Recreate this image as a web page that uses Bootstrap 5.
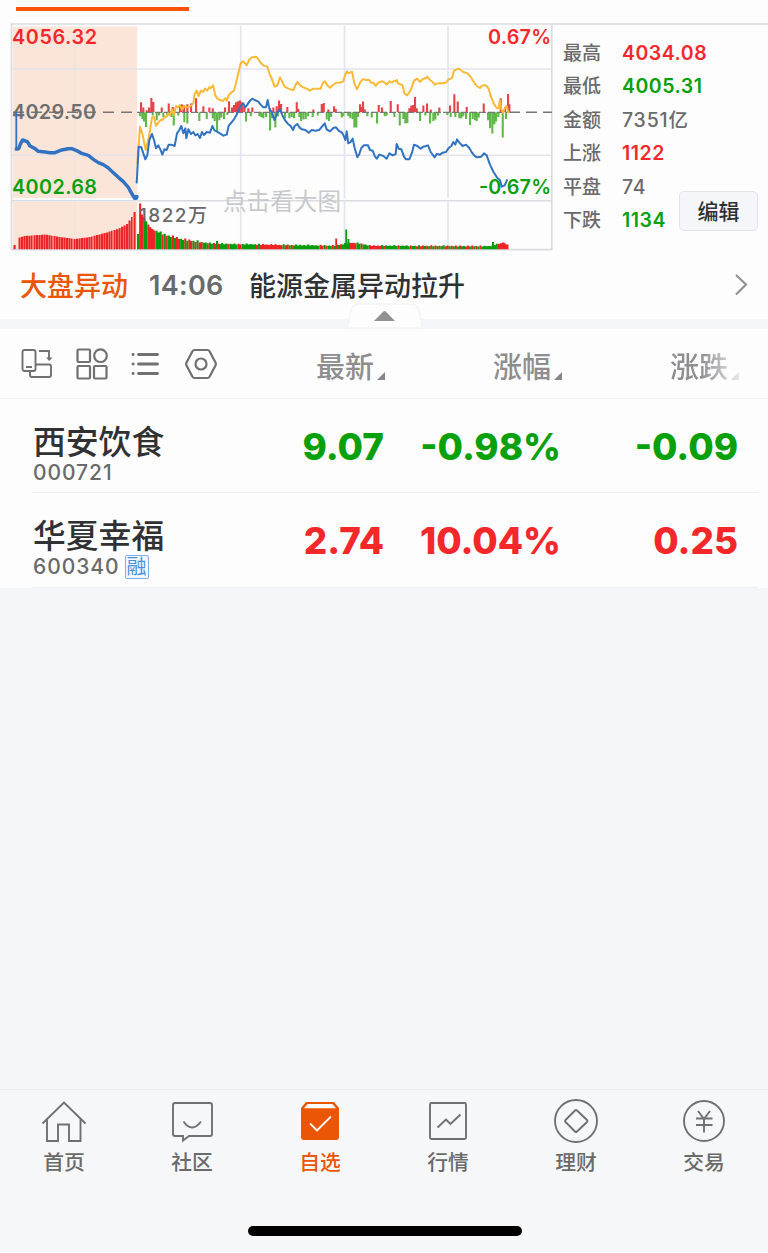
<!DOCTYPE html>
<html lang="zh-CN">
<head>
<meta charset="utf-8">
<meta name="viewport" content="width=device-width, initial-scale=1">
<title>自选</title>
<link href="https://cdn.jsdelivr.net/npm/bootstrap@5.3.0/dist/css/bootstrap.min.css" rel="stylesheet">
<style>
:root{--up:#f4282b;--down:#08a00b;--accent:#eb5506;--ink:#303133;--mute:#6a6a6a;--soft:#f4f6f9}
body{font-family:Inter,"Noto Sans CJK SC",sans-serif;background:#fdfdfe;color:var(--ink);line-height:1;height:1253px;overflow:hidden}
svg{display:block;flex:none}
.up{color:var(--up)}.down{color:var(--down)}.accent{color:var(--accent)}.mute{color:var(--mute)}
.tabline{height:23px;padding:7px 0 0 16px}
.tabline span{display:block;width:173px;height:4px;background:#fa5305}
.market{height:228px}
.market-side{border-top:2px solid #e1e3e9;padding:11.5px 0 0 9px}
.stat{height:33.5px;font-size:19px;font-weight:500}
.stat dt{width:59px;font-weight:500}
.stat dd{font-size:19.5px;letter-spacing:.8px}
.stat dd.up,.stat dd.down{font-weight:600;letter-spacing:.5px}
.btn-edit{right:10px;bottom:20px;width:79px;height:40px;font-size:21px;font-weight:500;background:#f5f6f9;border:1.5px solid #e2e4e9;border-radius:5px;padding:2px 0 0;line-height:36px;color:#303133}
.newsline{height:68px;padding:3px 20px 0;font-size:27px;font-weight:500}
.news-time{margin-left:21px;letter-spacing:.3px;font-weight:600;width:79px;margin-top:-3px}
.news-title{margin-left:21px}
.divider{height:10px;background:var(--soft)}
.grip{left:347px;top:-16px}
.cols{height:69.5px;border-bottom:1.5px solid #eff0f2;padding-left:21px;font-size:29px;font-weight:500;color:#8e8e90}
.colname{display:flex;align-items:flex-end;justify-content:flex-end;gap:3px;padding-top:4px}
.colname span.lbl{position:relative;top:2px}
.fade-end{-webkit-mask-image:linear-gradient(90deg,#000 45%,transparent 112%);mask-image:linear-gradient(90deg,#000 45%,transparent 112%);padding-bottom:4px;margin-bottom:-4px}
.stock{height:94.5px;margin:0 10px 0 32px;border-bottom:1.5px solid #eff0f2}
.stock-name{font-size:32.8px;font-weight:500;line-height:36px;padding-top:25px}
.stock-code{font-size:21px;letter-spacing:.95px;line-height:24px;font-weight:500;color:var(--mute);gap:5px;padding-top:1px}
.tagbox{width:24px;height:24px;border:1.5px solid #7db0e6;border-radius:2px;color:#4d8fd9;font-size:20px;line-height:22px;letter-spacing:0;font-weight:400;background:#f2f8ff;display:flex;justify-content:center}
.quote{font-size:36.8px;font-weight:800;line-height:95px;text-align:right}
.blank{height:501.5px;background:var(--soft)}
.tabbar{height:163px;background:#f6f7f9;border-top:1.5px solid #e9edef}
.tabitem{padding-top:8.5px;font-size:20.8px;font-weight:500;color:var(--mute);text-align:center}
.tabitem svg{margin:0 auto 8px}
.tabitem.sel{color:var(--accent)}
.homebar{width:274px;height:10px;border-radius:5px;background:#000;left:247.5px;bottom:16px}
.ln{fill:none;stroke:#707070;stroke-width:1.9}
</style>
</head>
<body>
<div class="tabline"><span></span></div>

<section class="market d-flex position-relative">
  <svg width="554" height="228" viewBox="0 23 554 228" font-size="19.8" font-weight="600">
    <path fill="#fbe5d9" d="M13 26.5h124V198H13zM13 202h124v47H13z"/>
    <g stroke="#e3e4ec" stroke-width="1.6" fill="none">
      <path d="M74.7 26v172M74.7 202v47" opacity=".5"/>
      <path d="M240.7 26v172M240.7 202v47M344.5 26v172M344.5 202v47M448 26v172M448 202v47M12 69H551M12 155.3H551"/>
      <path stroke="#d9dbe0" d="M10.5 24H554M11.5 24v226M551.8 24v226M11 200.7H552M11 249.6H552"/>
    </g>
    <g id="volume"></g>
    <g id="breadth"></g>
    <text x="223" y="210" font-size="23.6" font-weight="400" fill="#c8c9cc" textLength="118">点击看大图</text>
    <path d="M12 112.3h124" stroke="#777" stroke-width="1.5" stroke-dasharray="11 7" stroke-dashoffset="-1"/>
    <path d="M137 112.3h370" stroke="#777" stroke-width="1.2" stroke-dasharray="7 2"/>
    <path d="M509 112.3h43" stroke="#777" stroke-width="1.5" stroke-dasharray="11 6"/>
    <text x="139" y="222" font-size="19" font-weight="500" fill="#686868" textLength="68">1822万</text>
    <text x="12" y="44" fill="#f4282b" textLength="85">4056.32</text>
    <text x="12" y="119" fill="#6e6e6e" textLength="84">4029.50</text>
    <text x="12" y="193.500" fill="#08a00b" textLength="85">4002.68</text>
    <text x="488" y="44" fill="#f4282b" textLength="63">0.67%</text>
    <g fill="none" stroke-linejoin="round">
      <path stroke="#3173c2" stroke-width="10.5" stroke-linecap="round" transform="scale(.33333)" d="M49 447l7-1 6-16 6-10 14 5 8 13 15 8 10 8 20 2 15 2 15 0 20-8 20-4 10 0 15 6 15 8 20 6 15 12 15 10 15 6 15 10 15 14 15 14 15 13 15 17 10 18 8 14 8-4"/>
      <circle cx="135.500" cy="197.500" r="2.600" fill="#3173c2"/>
      <path stroke="#3173c2" stroke-width="1.8" d="M16.3 112v37"/>
      <g transform="translate(130 20) scale(.33333)" stroke-width="6">
        <polyline stroke="#fbb935" points="22,430 30,320 38,345 47,390 57,350 66,292 72,290 78,318 85,308 92,300 98,300 104,290 110,290 115,280 120,285 126,268 132,285 138,258 144,262 150,255 156,270 162,258 168,262 175,262 182,258 190,250 193,225 200,212 206,228 213,212 219,216 225,206 231,212 238,202 243,204 249,196 256,226 262,236 270,240 280,243 286,234 290,242 297,224 306,216 312,212 318,190 325,160 332,130 340,124 350,136 357,120 365,112 372,112 378,110 384,116 390,126 400,136 412,140 418,160 426,178 434,200 442,196 450,172 457,186 464,200 475,206 490,211 497,194 502,186 510,196 520,202 530,206 540,212 550,206 560,206 572,206 578,190 585,184 592,196 600,203 608,196 618,188 630,188 640,184 645,165 651,154 656,160 666,155 673,190 681,208 690,188 698,178 710,180 718,180 723,188 730,188 737,198 745,188 754,184 762,186 770,194 778,184 786,188 792,182 798,184 800,180 804,190 818,196 823,220 831,226 840,214 846,200 852,182 862,176 870,186 880,176 888,174 892,170 900,180 908,186 914,194 924,190 935,190 948,188 956,178 966,174 972,152 980,148 986,146 992,150 1000,156 1006,158 1012,160 1022,170 1030,184 1040,198 1050,204 1058,196 1068,196 1076,206 1083,230 1092,252 1100,264 1106,264 1110,240 1114,268 1119,278 1124,265 1130,258 1136,280"/>
        <polyline stroke="#3173c2" points="20,490 26,380 34,382 40,400 46,418 52,405 58,360 66,342 72,360 78,385 85,376 91,388 97,404 103,388 110,390 116,374 124,374 134,378 141,340 148,330 154,318 160,340 166,325 169,355 175,328 183,342 190,336 196,346 203,342 210,354 216,336 222,345 230,336 240,338 247,318 254,332 260,334 270,340 280,347 290,344 296,318 304,308 312,298 320,284 326,270 332,258 340,250 346,262 352,254 360,242 367,236 374,240 384,244 392,254 400,262 408,262 413,240 418,266 426,278 433,300 438,290 444,274 450,268 458,288 466,302 474,312 482,318 489,330 494,318 502,312 508,322 516,328 526,330 536,338 545,330 556,332 568,330 576,320 584,310 590,328 600,334 610,324 618,322 626,332 636,338 640,345 646,360 650,334 655,370 662,366 668,356 674,384 682,412 688,402 694,384 702,376 714,376 720,390 728,392 734,408 740,416 748,404 760,408 770,416 778,400 788,406 797,402 800,372 806,386 814,388 822,410 828,418 838,418 846,398 852,374 862,378 872,386 880,380 888,378 894,376 902,396 914,412 920,402 930,404 938,398 948,396 956,384 964,378 970,366 976,374 981,358 988,368 998,378 1008,374 1018,384 1026,398 1034,408 1042,412 1054,410 1062,400 1070,406 1080,434 1090,455 1102,474 1110,480 1115,500 1124,496 1132,478"/>
      </g>
    </g>
    <text x="479" y="193.500" fill="#08a00b" textLength="72">-0.67%</text>
  </svg>
  <div class="market-side flex-grow-1">
    <dl class="m-0">
      <div class="stat d-flex align-items-center"><dt class="mute">最高</dt><dd class="m-0 up">4034.08</dd></div>
      <div class="stat d-flex align-items-center"><dt class="mute">最低</dt><dd class="m-0 down">4005.31</dd></div>
      <div class="stat d-flex align-items-center"><dt class="mute">金额</dt><dd class="m-0 mute">7351亿</dd></div>
      <div class="stat d-flex align-items-center"><dt class="mute">上涨</dt><dd class="m-0 up">1122</dd></div>
      <div class="stat d-flex align-items-center"><dt class="mute">平盘</dt><dd class="m-0 mute">74</dd></div>
      <div class="stat d-flex align-items-center"><dt class="mute">下跌</dt><dd class="m-0 down">1134</dd></div>
    </dl>
  </div>
  <button class="btn btn-edit position-absolute">编辑</button>
</section>

<section class="newsline d-flex align-items-center">
  <span class="accent">大盘异动</span>
  <span class="mute news-time">14:06</span>
  <span class="news-title">能源金属异动拉升</span>
  <svg class="ms-auto" width="14" height="24" viewBox="0 0 14 24" style="margin-top:-3px"><path d="M2 2l10 9.500L2 21.500" fill="none" stroke="#929294" stroke-width="2.200"/></svg>
</section>
<div class="divider position-relative">
  <svg class="grip position-absolute" width="76" height="26" viewBox="0 0 76 26"><path d="M.7 25L3.500 9Q5 1 13 1H63Q71 1 72.500 9L75.300 25z" fill="#fdfdfe" stroke="#f3f4f6" stroke-width="1.500"/><path d="M27 18L36.300 8.500q1.200-1 2.400 0L48 18z" fill="#919191"/></svg>
</div>

<section class="cols d-flex align-items-center">
  <div class="d-flex align-items-center" style="gap:22.5px;width:205px;padding-top:1px">
    <svg width="32" height="32" viewBox="0 0 32 32" class="ln"><rect x="1.500" y="2" width="13" height="21" rx="2"/><path d="M5 19h6M15 16.500h13a2 2 0 0 1 2 2V27a2 2 0 0 1-2 2H11a2 2 0 0 1-2-2v-4M18 3h10v9"/><path d="M25 9.500h6.500l-3.300 3.500z" fill="#707070" stroke="none"/></svg>
    <svg width="32" height="32" viewBox="0 0 32 32" class="ln" style="stroke-width:2.200"><rect x="1.500" y="1.500" width="12.500" height="12.500" rx="1"/><circle cx="24.500" cy="7.700" r="6.300"/><rect x="1.500" y="18" width="12.500" height="12.500" rx="1"/><rect x="18" y="18" width="12.500" height="12.500" rx="1"/></svg>
    <svg width="32" height="32" viewBox="0 0 32 32" class="ln" style="stroke-width:2.800;stroke-linecap:round"><path d="M8.500 6.500h19M8.500 16h19M8.500 25.500h19M3 6.500h.2M3 16h.2M3 25.500h.2"/></svg>
    <svg width="32" height="32" viewBox="0 0 32 32" class="ln" style="stroke-linejoin:round;stroke-width:2.200"><path d="M9.500 2h13q1.300 0 2 1.200l6 11.300q.7 1.500 0 3l-6 11.300q-.7 1.200-2 1.200h-13q-1.300 0-2-1.200l-6-11.300q-.7-1.500 0-3l6-11.300q.7-1.200 2-1.200z"/><circle cx="16" cy="16" r="5.500"/></svg>
  </div>
  <div class="colname" style="width:159px"><span class="lbl">最新</span><svg width="8" height="8" viewBox="0 0 8 8"><path d="M8 0v8H0z" fill="#86868a"/></svg></div>
  <div class="colname" style="width:177px"><span class="lbl">涨幅</span><svg width="8" height="8" viewBox="0 0 8 8"><path d="M8 0v8H0z" fill="#86868a"/></svg></div>
  <div class="colname" style="width:177px"><span class="d-flex align-items-end fade-end" style="gap:3px"><span class="lbl">涨跌</span><svg width="8" height="8" viewBox="0 0 8 8"><path d="M8 0v8H0z" fill="#86868a"/></svg></span></div>
</section>

<section>
  <div class="stock d-flex">
    <div style="width:192px;padding-left:1px"><div class="stock-name">西安饮食</div><div class="stock-code d-flex align-items-center">000721</div></div>
    <div class="quote down" style="width:160px">9.07</div><div class="quote down" style="width:177px">-0.98%</div><div class="quote down" style="width:177px">-0.09</div>
  </div>
  <div class="stock d-flex">
    <div style="width:192px;padding-left:1px"><div class="stock-name">华夏幸福</div><div class="stock-code d-flex align-items-center">600340<span class="tagbox">融</span></div></div>
    <div class="quote up" style="width:160px">2.74</div><div class="quote up" style="width:177px">10.04%</div><div class="quote up" style="width:177px">0.25</div>
  </div>
</section>
<div class="blank"></div>

<nav class="tabbar position-relative">
  <div class="row g-0">
    <div class="col tabitem"><svg width="46" height="46" viewBox="0 0 46 46" class="ln"><path d="M1.500 24.500L23 3.500l21.500 21M6 20.500v21.500h11V25.500h11V42h11.500V20.500"/></svg>首页</div>
    <div class="col tabitem"><svg width="46" height="46" viewBox="0 0 46 46" class="ln"><path d="M6 4h35a2 2 0 0 1 2 2v29a2 2 0 0 1-2 2H20l-6 4.500V37H6a2 2 0 0 1-2-2V6a2 2 0 0 1 2-2zM14.500 22.500q8.500 12 17.500 0"/></svg>社区</div>
    <div class="col tabitem sel"><svg width="46" height="46" viewBox="0 0 46 46"><path d="M9 3h28l5 6v29q0 3-3 3H7q-3 0-3-3V9z" fill="#eb5506"/><path d="M10.500 5h25l3.500 4.300h-32z" fill="#fff"/><path d="M13 24.500l7 7L34 17.500" fill="none" stroke="#fff" stroke-width="1.800"/></svg>自选</div>
    <div class="col tabitem"><svg width="46" height="46" viewBox="0 0 46 46" class="ln"><rect x="5" y="4" width="36" height="36" rx="1.500"/><path d="M12.500 28.500l8.500-8 4.500 4.500L35.500 15.500"/></svg>行情</div>
    <div class="col tabitem"><svg width="46" height="46" viewBox="0 0 46 46" class="ln"><circle cx="23" cy="22" r="21"/><path d="M22 11.500q1-1 2 0L34 21q1 1 0 2L24 32.500q-1 1-2 0L12.500 23q-1-1 0-2z"/></svg>理财</div>
    <div class="col tabitem"><svg width="46" height="46" viewBox="0 0 46 46" class="ln"><circle cx="23" cy="22" r="20"/><path d="M17 12l6 8 6-8M23 20v13.500M15 19.500h16.500M15 26h16.500"/></svg>交易</div>
  </div>
  <div class="homebar position-absolute"></div>
</nav>

<script src="https://cdn.jsdelivr.net/npm/bootstrap@5.3.0/dist/js/bootstrap.bundle.min.js"></script>
<script>
const RED = '#ee2327', GREEN = '#079c0b';
const path = (id, d, fill, extra = '') =>
  document.getElementById(id).insertAdjacentHTML('beforeend', `<path d="${d}" fill="${fill}" ${extra}/>`);

// Trading volume: interpolated envelope, one bar per minute group
const env = [[13,245],[16,245],[17,238],[25,236],[45,234.5],[60,237],[75,239],[90,237],[105,233],[118,229],[127,224],[132,217],[135,211],[137,211],
  [137.1,234],[138.5,234],[138.6,203],[140,203],[141,213],[144,217],[146,221],[150,227],[155,231],[165,235.5],[180,239.5],[195,242],[215,244],[240,244.5],[300,245.5],[335,246],[350,243],[358,243.5],[370,246],[490,246.5],[500,243.5],[508,245]];
const topAt = x => { for (let i = 1; i < env.length; i++) if (x <= env[i][0]) {
  const [a, b] = env[i - 1], [c, d] = env[i]; return b + (d - b) * (x - a) / (c - a); } return 247; };
let red = '', green = '';
const bar = (x, w, y) => `M${x.toFixed(1)} ${y.toFixed(1)}h${w}V249.300h-${w}z`;
for (let x = 13.5, n = 0; x < 136; x += 2.5, n++) if (n !== 1) red += bar(x, n % 8 === 7 ? 1.6 : 2.15, topAt(x + 1));
const tone = 'grrggrrrrgggrgrggrgrrggrgrrgrgrrggrggrgrggggrggggrrgggggggrgrrrrrrrrrrrgrrgrgggggggggggggrrgrggrgrgrgggrrrrggrgggrrrrrrgrggggggrgggggrggrgrrgrgrgrgrggrrgrgrgrggrrgrgrgrggggggggrrrrr';
for (let x = 137, n = 0; x < 508; x += 2.05, n++) {
  const y = topAt(x + 1) - (n > 8 ? [0, 1.6, .3, 1, 0, 2][(n * 7) % 6] * (x < 200 ? 1 : .5) : 0);
  if (tone[n % tone.length] === 'r') red += bar(x, 2.1, y); else green += bar(x, 2.1, y);
}
green += bar(345.3, 1.8, 229.500) + bar(347.500, 1.8, 239) + bar(492, 2, 242) + bar(216, 2, 241);
red += bar(335.300, 1.8, 238.500) + bar(502, 2.5, 242.500) + bar(505, 3.500, 244.500);
path('volume', red, RED);
path('volume', green, GREEN);

// Advance / decline bars either side of the previous close
const adv = [33,30,40,14,50,6,57,14,64,43,70,31,95,14,116,26,128,16,150,22,155,24,162,22,172,24,183,26,198,42,220,18,238,14,248,12,285,14,297,33,306,14,312,22,318,30,324,33,330,35,336,30,343,20,355,12,367,14,420,12,430,14,440,18,447,35,453,25,472,16,500,30,505,10,550,8,575,25,581,28,595,8,612,18,617,10,
  690,24,694,16,699,32,704,8,746,22,756,14,782,34,803,24,838,12,844,20,850,22,855,46,860,12,880,20,891,26,902,8,928,14,960,20,973,54,983,32,1010,16,1061,26,1112,42,1125,16,1134,55,1138,24];
const dec = [30,12,37,20,42,28,48,44,68,10,80,24,87,10,100,14,112,12,124,14,131,40,145,10,163,30,172,34,208,26,230,20,248,18,254,26,261,56,268,24,274,16,282,20,292,8,348,28,362,12,388,12,394,15,400,18,408,14,420,55,426,18,436,46,444,12,465,18,478,18,485,14,492,18,508,14,513,26,520,22,527,20,534,12,548,14,563,10,590,22,597,26,603,14,635,16,640,12,
  655,12,661,18,668,20,673,46,679,46,684,14,712,12,725,16,741,34,764,12,770,10,793,14,809,40,820,20,826,34,832,32,870,26,886,10,900,34,910,26,916,22,924,10,952,8,962,14,976,14,988,18,994,18,1000,12,1008,20,1020,38,1028,20,1035,24,1040,26,1046,16,1074,24,1080,48,1087,64,1093,36,1098,28,1105,14,1118,76,1128,20];
const ticks = (a, s) => { let d = ''; for (let i = 0; i < a.length; i += 2)
  d += `M${(130 + a[i] / 3 - 1).toFixed(1)} 112.300h2.1v${(s * a[i + 1] / 3).toFixed(1)}h-2.1z`; return d; };
path('breadth', ticks(adv, -1), '#e84146');
path('breadth', ticks(dec, 1), '#5fba48');
</script>
</body>
</html>
